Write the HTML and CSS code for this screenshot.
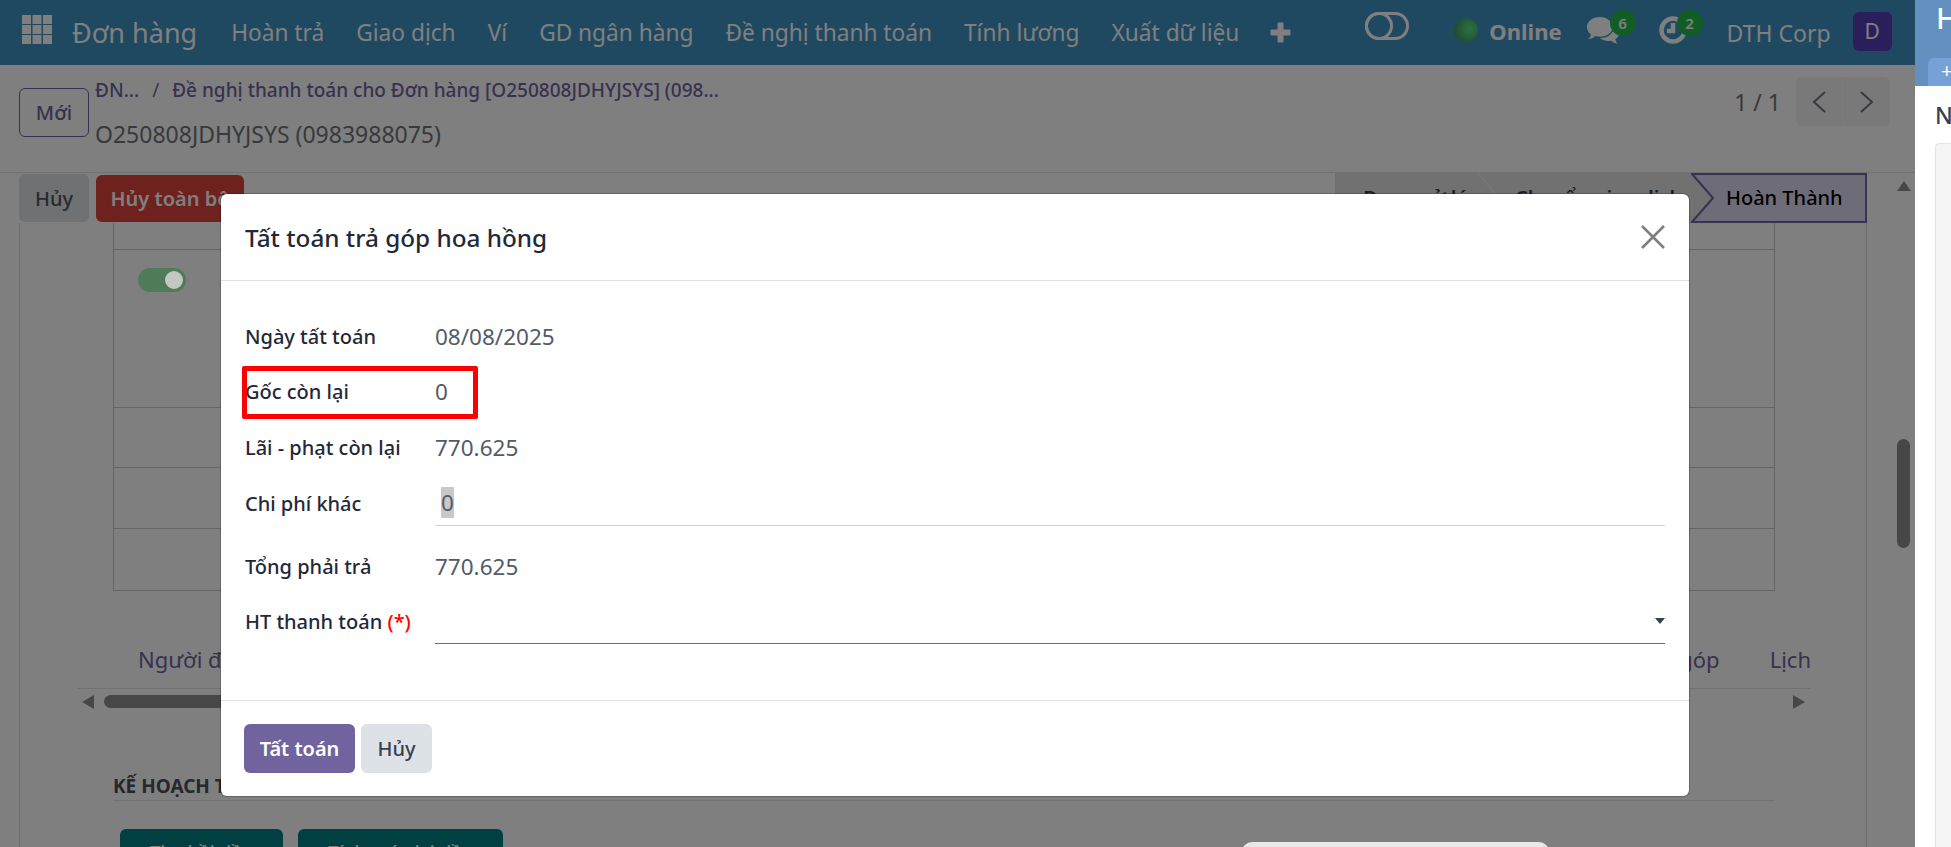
FILE: index.html
```html
<!DOCTYPE html>
<html lang="vi">
<head>
<meta charset="utf-8">
<title>Tất toán trả góp hoa hồng</title>
<link rel="stylesheet" href="styles.css">
</head>
<body>
<div class="app">
  <div class="main">
    <header class="nav">
      <svg class="apps" viewBox="0 0 30 29" aria-hidden="true"><path d="M0 0h9v9H0zM10.500 0h9v9h-9zM21 0h9v9h-9zM0 10h9v9H0zM10.500 10h9v9h-9zM21 10h9v9h-9zM0 20h9v9H0zM10.500 20h9v9h-9zM21 20h9v9h-9z"/></svg>
      <span class="brand">Đơn hàng</span>
      <nav class="menu">
        <span>Hoàn trả</span><span>Giao dịch</span><span>Ví</span><span>GD ngân hàng</span><span>Đề nghị thanh toán</span><span>Tính lương</span><span>Xuất dữ liệu</span>
      </nav>
      <svg class="plus" viewBox="0 0 21 21" aria-hidden="true"><path d="M7.500 1.500a1 1 0 0 1 1-1h4a1 1 0 0 1 1 1v6h6a1 1 0 0 1 1 1v4a1 1 0 0 1-1 1h-6v6a1 1 0 0 1-1 1h-4a1 1 0 0 1-1-1v-6h-6a1 1 0 0 1-1-1v-4a1 1 0 0 1 1-1h6z"/></svg>
      <div class="systray">
        <svg class="toggle-ico" viewBox="0 0 44 28" aria-hidden="true"><rect x="1.500" y="1.500" width="41" height="25" rx="12.500"/><circle cx="14" cy="14" r="12.500"/></svg>
        <i class="presence"></i>
        <b class="online">Online</b>
        <span class="tray tray-chat">
          <svg viewBox="0 0 32 27" aria-hidden="true"><path d="M13 0C6 0 0 4 0 10c0 3 1.500 5.500 4 7.500-.500 2-1.500 3.500-3 4.500 3 0 5.500-1 7.500-3 1.500.5 3 .7 4.500.7 7 0 13-4.700 13-9.700S20 0 13 0z"/><path d="M27 10c0 6-6 11-13 11h-1c2 2 5 3 8 3 1 0 2 0 3-.300 2 1.600 4 2.800 7 2.800-1.500-1-2.300-2.500-2.700-4.300C31 20.500 32 18.500 32 16c0-3-2-5-5-6z"/></svg>
          <em class="badge">6</em>
        </span>
        <span class="tray tray-clock">
          <svg viewBox="0 0 28 28" aria-hidden="true"><circle cx="14" cy="14" r="11.500"/><path d="M14 7v8H8"/></svg>
          <em class="badge">2</em>
        </span>
        <span class="company">DTH Corp</span>
        <span class="avatar">D</span>
      </div>
    </header>

    <section class="control">
      <button class="btn btn-new">Mới</button>
      <div class="crumbs">
        <div class="crumb-line"><span>ĐN...</span><i>/</i><span>Đề nghị thanh toán cho Đơn hàng [O250808JDHYJSYS] (098...</span></div>
        <div class="record">O250808JDHYJSYS (0983988075)</div>
      </div>
      <div class="pager">
        <span class="count">1 / 1</span>
        <div class="pager-btns">
          <span><svg viewBox="0 0 14 22" aria-hidden="true"><path d="M13 1 2 11l11 10"/></svg></span>
          <span><svg viewBox="0 0 14 22" aria-hidden="true"><path d="m1 1 11 10L1 21"/></svg></span>
        </div>
      </div>
    </section>

    <div class="work">
      <div class="form-col">
        <div class="actions">
          <button class="btn btn-grey">Hủy</button>
          <button class="btn btn-red">Hủy toàn bộ</button>
          <div class="status">
            <span class="st st-1">Đang xử lý</span>
            <svg class="st-sep" viewBox="0 0 18 22" aria-hidden="true"><path d="M0 0l18 22"/></svg>
            <span class="st st-2">Chuyển giao dịch</span>
            <span class="st-active">
              <svg viewBox="0 0 176 50" preserveAspectRatio="none" aria-hidden="true"><path d="M1 1h174v48H1l21-24z"/></svg>
              <span>Hoàn Thành</span>
            </span>
          </div>
        </div>
        <div class="sheet">
          <div class="grid-table">
            <div class="tr tr-a"></div>
            <div class="tr tr-b"><span class="switch"><i></i></span></div>
            <div class="tr tr-c"></div>
            <div class="tr tr-d"></div>
            <div class="tr tr-e"></div>
          </div>
          <div class="tabs">
            <span class="tab-first">Người đại diện</span>
            <span class="tab-gap">Trả góp</span>
            <span>Lịch</span>
          </div>
          <div class="hscroll">
            <svg viewBox="0 0 12 14" aria-hidden="true"><path d="M12 0v14L0 7z"/></svg>
            <i class="hthumb"></i>
            <svg class="hnext" viewBox="0 0 12 14" aria-hidden="true"><path d="M0 0v14l12-7z"/></svg>
          </div>
          <h3 class="plan">KẾ HOẠCH THANH TOÁN</h3>
          <div class="plan-btns">
            <button class="btn btn-teal btn-teal-a">Thu hồi tiền</button>
            <button class="btn btn-teal btn-teal-b">Tính toán lại tiền</button>
          </div>
        </div>
      </div>
      <div class="vscroll">
        <svg viewBox="0 0 14 10" aria-hidden="true"><path d="M7 0l7 10H0z"/></svg>
        <i class="vthumb"></i>
      </div>
    </div>

    <div class="backdrop"></div>
    <div class="toast"></div>

    <div class="modal" role="dialog">
      <div class="modal-head">
        <h2>Tất toán trả góp hoa hồng</h2>
        <svg class="close" viewBox="0 0 24 24" aria-hidden="true"><path d="M1 1l22 22M23 1 1 23"/></svg>
      </div>
      <div class="modal-body">
        <div class="row"><label>Ngày tất toán</label><span class="val">08/08/2025</span></div>
        <div class="row"><label>Gốc còn lại</label><span class="val">0</span></div>
        <div class="row"><label>Lãi - phạt còn lại</label><span class="val">770.625</span></div>
        <div class="row row-input"><label>Chi phí khác</label><span class="val field"><mark>0</mark></span></div>
        <div class="row"><label>Tổng phải trả</label><span class="val">770.625</span></div>
        <div class="row"><label>HT thanh toán <b>(*)</b></label><span class="val field field-select"><svg viewBox="0 0 10 6" aria-hidden="true"><path d="M0 0h10L5 6z"/></svg></span></div>
      </div>
      <div class="modal-foot">
        <button class="btn btn-primary">Tất toán</button>
        <button class="btn btn-cancel">Hủy</button>
      </div>
      <div class="redbox"></div>
    </div>
  </div>

  <aside class="side">
    <div class="side-head">
      <span class="side-title">H</span>
      <span class="side-tab">+</span>
    </div>
    <div class="side-body">
      <div class="side-label">N</div>
      <div class="side-box"></div>
    </div>
  </aside>
</div>
</body>
</html>
```

FILE: styles.css
```css
* { box-sizing: border-box; }
html, body { margin: 0; height: 847px; overflow: hidden; }
body { font-family: "Noto Sans", "Open Sans", sans-serif; color: #374151; background: #fff; }
button { font: inherit; border: 0; }

.app { display: flex; height: 847px; overflow: hidden; }
.main { position: relative; flex: none; width: 1915px; height: 847px; overflow: hidden; background: #fff; display: flex; flex-direction: column; }

/* navbar */
.nav { height: 65px; flex: none; background: #3e90c2; color: #fff; display: flex; align-items: center; padding-left: 22px; }
.apps { width: 30px; height: 29px; fill: #fff; margin-top: -6px; }
.brand { font-size: 27px; margin-left: 20px; margin-right: 34px; }
.menu { display: flex; gap: 32px; font-size: 22.700px; }
.plus { width: 21px; height: 21px; fill: #fff; margin-left: 31px; }
.systray { margin-left: 74px; display: flex; align-items: center; }
.toggle-ico { width: 44px; height: 28px; fill: none; stroke: #fff; stroke-width: 3; margin-top: -14px; }
.presence { width: 24px; height: 24px; border-radius: 50%; margin-left: 45px; margin-top: -5px; background: radial-gradient(circle at 65% 45%, #5fe08f, #3f9a5e 75%); }
.online { font-size: 22px; font-weight: 700; margin-left: 11px; margin-top: -3px; }
.tray { position: relative; display: block; margin-top: -5px; }
.tray svg { display: block; }
.tray-chat { margin-left: 25px; }
.tray-chat svg { width: 32px; height: 27px; fill: #fff; }
.tray-clock { margin-left: 40px; }
.tray-clock svg { width: 28px; height: 28px; fill: none; stroke: #fff; stroke-width: 4.500; }
.badge { position: absolute; width: 26px; height: 26px; border-radius: 50%; background: #25b84c; font-style: normal; font-weight: 600; font-size: 15px; line-height: 26px; text-align: center; color: #fff; }
.tray-chat .badge { left: 23px; top: -7px; }
.tray-clock .badge { left: 18px; top: -6px; }
.company { font-size: 23px; margin-left: 40px; }
.avatar { width: 39px; height: 39px; border-radius: 6px; background: #543eb8; margin-left: 22px; margin-top: -3px; text-align: center; font-size: 21px; line-height: 39px; }

/* buttons */
.btn { display: block; border-radius: 6px; font-size: 20px; font-weight: 500; text-align: center; padding: 0; }

/* control panel */
.control { height: 108px; flex: none; border-bottom: 1px solid #dee2e6; position: relative; display: flex; padding-left: 19px; padding-right: 25px; }
.btn-new { width: 70px; height: 49px; margin-top: 23px; background: #fff; border: 1px solid #71639e; color: #71639e; }
.crumbs { margin-left: 6px; padding-top: 12px; }
.crumb-line { font-size: 19px; font-weight: 500; color: #71639e; display: flex; height: 27px; line-height: 27px; }
.crumb-line i { font-style: normal; font-weight: 400; color: #6b7280; margin: 0 13px; }
.record { font-size: 23px; margin-top: 15px; color: #6f737b; line-height: 30px; }
.pager { margin-left: auto; display: flex; align-items: flex-start; padding-top: 12px; }
.count { font-size: 23px; line-height: 50px; margin-right: 15px; color: #6f737b; }
.pager-btns { display: flex; width: 94px; height: 49px; background: #f2f3f5; border-radius: 6px; }
.pager-btns span { flex: 1; display: flex; align-items: center; justify-content: center; }
.pager-btns span + span { border-left: 1px solid #fafafa; }
.pager-btns svg { width: 14px; height: 22px; fill: none; stroke: #6f737b; stroke-width: 2; }

/* main column */
.work { flex: 1; display: flex; min-height: 0; }
.form-col { width: 1867px; flex: none; }
.actions { height: 50px; display: flex; align-items: flex-start; padding-left: 19px; }
.btn-grey { width: 70px; height: 48px; margin-top: 1px; background: #dee2e6; color: #50555e; }
.btn-red { width: 148px; height: 47px; margin-left: 7px; margin-top: 2px; background: #de423c; color: #fff; font-weight: 600; }
.status { margin-left: auto; width: 532px; height: 50px; background: #e2e3e5; display: flex; font-size: 20px; font-weight: 600; position: relative; }
.st { line-height: 50px; color: #374151; white-space: nowrap; }
.st-1 { margin-left: 28px; width: 152px; }
.st-2 { width: 170px; }
.st-sep { position: absolute; left: 143px; top: 0; width: 18px; height: 22px; fill: none; stroke: #f3f4f6; stroke-width: 1; }
.st-active { position: absolute; right: 0; top: 0; width: 176px; height: 50px; line-height: 50px; color: #000; font-weight: 500; padding-left: 35px; font-size: 20px; white-space: nowrap; }
.st-active svg { position: absolute; inset: 0; width: 100%; height: 100%; fill: #dcd8f0; stroke: #71639e; stroke-width: 2; }
.st-active span { position: relative; }

.sheet { margin-left: 19px; border-left: 1px solid #d8dadd; border-right: 1px solid #d8dadd; height: 625px; padding-left: 93px; overflow: hidden; }
.grid-table { width: 1662px; border: 1px solid #c9cbce; border-top: 0; }
.tr { border-bottom: 1px solid #c9cbce; }
.tr:last-child { border-bottom: 0; }
.tr-a { height: 27px; }
.tr-b { height: 158px; padding: 18px 0 0 24px; }
.tr-c { height: 60px; }
.tr-d { height: 61px; }
.tr-e { height: 61px; }
.switch { display: block; width: 48px; height: 24px; border-radius: 12px; background: #4f7b58; position: relative; z-index: 1; }
.switch i { position: absolute; right: 3px; top: 3px; width: 18px; height: 18px; border-radius: 50%; background: #c4c8c4; }

.tabs { margin-left: -36px; margin-top: 54px; width: 1734px; height: 44px; padding-left: 61px; border-bottom: 1px solid #dee2e6; display: flex; font-size: 22px; line-height: 28px; color: #71639e; }
.tab-first { margin-right: auto; }
.tab-gap { margin-right: 50px; }
.hscroll { margin-left: -36px; width: 1734px; height: 15px; margin-top: 5px; display: flex; align-items: center; position: relative; }
.hscroll svg { width: 12px; height: 14px; fill: #8f8f8f; margin-left: 5px; }
.hthumb { display: block; width: 400px; height: 13px; margin-left: 10px; border-radius: 7px; background: #8f8f8f; }
.hscroll .hnext { margin-left: auto; margin-right: 6px; }
.plan { width: 1662px; margin: 65px 0 0; height: 27px; font-size: 19px; line-height: 24px; font-weight: 700; color: #4b5059; border-bottom: 1px solid #dee2e6; }
.plan-btns { display: flex; gap: 15px; margin: 28px 0 0 7px; }
.btn-teal { height: 46px; background: #017e84; color: #fff; font-size: 18px; }
.btn-teal-a { width: 163px; }
.btn-teal-b { width: 205px; }

.vscroll { flex: 1; position: relative; padding-left: 30px; }
.vscroll svg { display: block; width: 14px; height: 10px; fill: #8f8f8f; margin-top: 8px; }
.vthumb { display: block; width: 13px; height: 109px; border-radius: 7px; background: #8f8f8f; margin-top: 248px; }

/* overlays */
.backdrop { position: absolute; inset: 0; background: rgba(0, 0, 0, .5); }
.toast { position: absolute; left: 1242px; top: 842px; width: 307px; height: 40px; border-radius: 10px; background: #e8e8e8; }

.modal { position: absolute; left: 221px; top: 194px; width: 1468px; height: 602px; background: #fff; border-radius: 6px; box-shadow: 0 0 0 1px rgba(0,0,0,.2); display: flex; flex-direction: column; }
.modal-head { height: 87px; flex: none; border-bottom: 1px solid #dee2e6; display: flex; align-items: center; justify-content: space-between; padding: 0 24px; }
.modal-head h2 { margin: 0; font-size: 24.300px; font-weight: 500; color: #1f2937; }
.close { width: 24px; height: 24px; fill: none; stroke: #808080; stroke-width: 2.600; }

.modal-body { flex: 1; padding: 32.500px 24px 0; }
.row { display: flex; height: 45px; align-items: center; margin-bottom: 10.700px; }
.row label { width: 190px; flex: none; font-size: 20px; font-weight: 500; color: #1f2937; }
.row label b { color: #f00; font-weight: 500; }
.val { flex: 1; font-size: 22.500px; color: #525b68; }
.field { height: 45px; display: flex; align-items: center; border-bottom: 1px solid #cfd2d6; padding-left: 6px; }
.field mark { background: #c8c8c8; color: #525b68; }
.row-input { margin-bottom: 18px; }
.field-select { border-bottom-color: #71639e; justify-content: flex-end; padding-right: 0; }
.field-select svg { width: 10px; height: 6px; fill: #374151; }

.modal-foot { height: 96px; flex: none; border-top: 1px solid #dee2e6; display: flex; gap: 6px; padding: 23px 23px 0; }
.btn-primary { width: 111px; height: 49px; background: #71639e; color: #fff; font-weight: 600; }
.btn-cancel { width: 71px; height: 49px; background: #dee2e6; color: #374151; }

.redbox { position: absolute; left: 21px; top: 172px; width: 236px; height: 53px; border: 5px solid #f00; border-radius: 2px; }

/* side panel */
.side { flex: 1; display: flex; flex-direction: column; min-width: 0; }
.side-head { height: 86px; flex: none; background: #6390bf; position: relative; padding-left: 21px; overflow: hidden; }
.side-title { display: block; color: #fff; font-size: 29px; font-weight: 500; line-height: 36px; }
.side-tab { position: absolute; left: 13px; top: 58px; width: 60px; height: 28px; background: #75a1d6; border-radius: 6px 6px 0 0; color: #fff; font-size: 20px; line-height: 26px; padding-left: 13px; }
.side-body { flex: 1; padding-left: 20px; overflow: hidden; }
.side-label { font-size: 23px; font-weight: 500; color: #374151; line-height: 30px; margin-top: 14px; }
.side-box { width: 60px; height: 720px; margin-top: 13px; background: #f5f5f5; border: 1px solid #e3e3e3; border-radius: 4px; }
```
